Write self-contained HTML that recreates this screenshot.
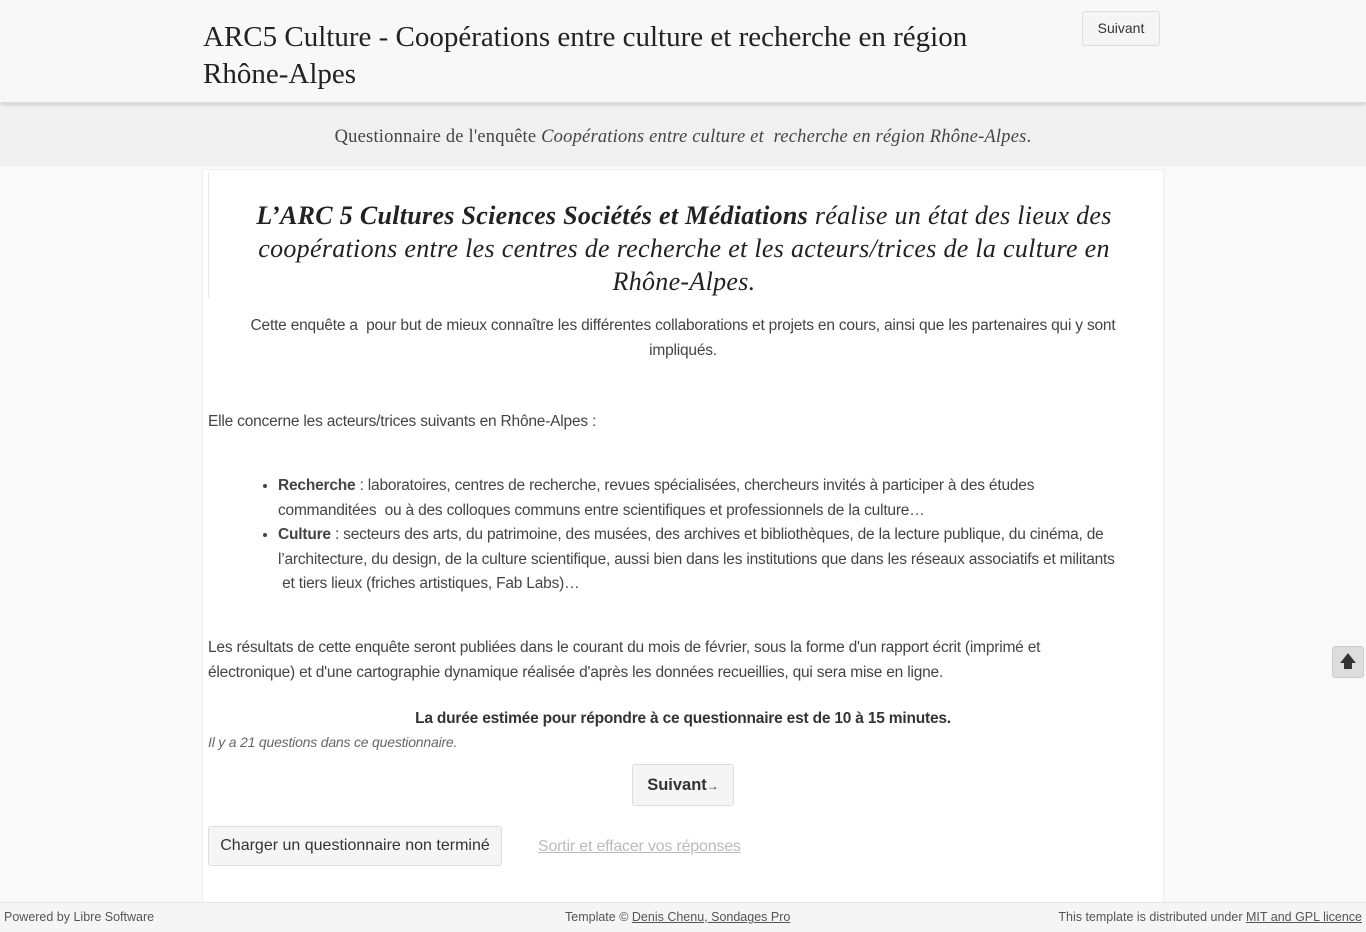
<!DOCTYPE html>
<html><head><meta charset="utf-8"><style>
body{margin:0;background:#f9f9f9;font-family:"Liberation Sans",sans-serif;color:#333;width:1366px;height:931px;overflow:hidden;position:relative}
.top{height:102px;background:#f8f8f8;border-bottom:1px solid #ddd;box-shadow:0 3px 4px rgba(0,0,0,.15);position:relative}
.top h1{position:absolute;left:203px;top:19px;margin:0;font:29px/37px "Liberation Serif",serif;color:#222;width:850px;font-weight:normal}
.btn{position:absolute;background:#f5f5f5;border:1px solid #ddd;border-radius:3px;color:#333;box-sizing:border-box;text-align:center}
.band{position:absolute;top:108px;left:0;width:1366px;height:58px;background:#f0f0f0;text-align:center;font:18.5px/58px "Liberation Serif",serif;color:#444;letter-spacing:.2px}
.main{position:absolute;left:202px;top:169px;width:960px;height:740px;background:#fff;border:1px solid #eee}
.lead{position:absolute;left:5px;top:3px;width:950px;height:125px;border-left:1px solid #e5e5e5}
.lead p{margin:26px 15px 0 15px;text-align:center;font:italic 26px/33px "Liberation Serif",serif;color:#222;letter-spacing:.3px}
.t{position:absolute;font-size:15.5px;line-height:24.5px;color:#444;letter-spacing:-.2px}
ul{margin:0;padding-left:70px}
.foot{position:absolute;top:902px;left:0;width:1366px;height:29px;background:#f5f5f5;border-top:1px solid #e5e5e5;font-size:12.5px;color:#555;line-height:28px}
.foot a{color:#555}
</style></head><body>
<div class="top"><h1>ARC5 Culture - Coopérations entre culture et recherche en région Rhône-Alpes</h1>
<div class="btn" style="left:1082px;top:11px;width:78px;height:35px;line-height:33px;font-size:14px">Suivant</div></div>
<div class="band">Questionnaire de l'enquête <i>Coopérations entre culture et &nbsp;recherche en région Rhône-Alpes</i>.</div>
<div class="main">
<div class="lead"><p><b>L’ARC 5 Cultures Sciences Sociétés et Médiations</b> réalise un état des lieux des coopérations entre les centres de recherche et les acteurs/trices de la culture en Rhône-Alpes.</p></div>
<div class="t" style="left:30px;top:144px;width:900px;text-align:center">Cette enquête a &nbsp;pour but de mieux connaître les différentes collaborations et projets en cours, ainsi que les partenaires qui y sont impliqués.</div>
<div class="t" style="left:5px;top:240px">Elle concerne les acteurs/trices suivants en Rhône-Alpes :</div>
<div class="t" style="left:5px;top:304px;width:925px"><ul><li><b>Recherche</b> : laboratoires, centres de recherche, revues spécialisées, chercheurs invités à participer à des études commanditées &nbsp;ou à des colloques communs entre scientifiques et professionnels de la culture…</li><li><b>Culture</b> : secteurs des arts, du patrimoine, des musées, des archives et bibliothèques, de la lecture publique, du cinéma, de l’architecture, du design, de la culture scientifique, aussi bien dans les institutions que dans les réseaux associatifs et militants &nbsp;et tiers lieux (friches artistiques, Fab Labs)…</li></ul></div>
<div class="t" style="left:5px;top:466px;width:880px">Les résultats de cette enquête seront publiées dans le courant du mois de février, sous la forme d'un rapport écrit (imprimé et électronique) et d'une cartographie dynamique réalisée d'après les données recueillies, qui sera mise en ligne.</div>
<div class="t" style="left:0;top:537px;width:960px;text-align:center;font-weight:bold;color:#333">La durée estimée pour répondre à ce questionnaire est de 10 à 15 minutes.</div>
<div class="t" style="left:5px;top:560px;font-style:italic;font-size:14px;color:#666">Il y a 21 questions dans ce questionnaire.</div>
<div class="btn" style="left:429px;top:594px;width:102px;height:42px;line-height:40px;font-size:16.5px;font-weight:bold">Suivant<span style="font-size:12px">→</span></div>
<div class="btn" style="left:5px;top:656px;width:294px;height:40px;line-height:38px;font-size:16px">Charger un questionnaire non terminé</div>
<div class="t" style="left:335px;top:665px;color:#bbb;text-decoration:underline;font-size:16px">Sortir et effacer vos réponses</div>
</div>
<div class="btn" style="left:1332px;top:646px;width:32px;height:32px;background:#ddd;border-color:#ccc;line-height:30px;font-size:17px">&#129093;</div>
<div class="foot"><span style="position:absolute;left:4px">Powered by Libre Software</span>
<span style="position:absolute;left:565px">Template © <a href="#">Denis Chenu, Sondages Pro</a></span>
<span style="position:absolute;right:4px">This template is distributed under <a href="#">MIT and GPL licence</a></span></div>
</body></html>
